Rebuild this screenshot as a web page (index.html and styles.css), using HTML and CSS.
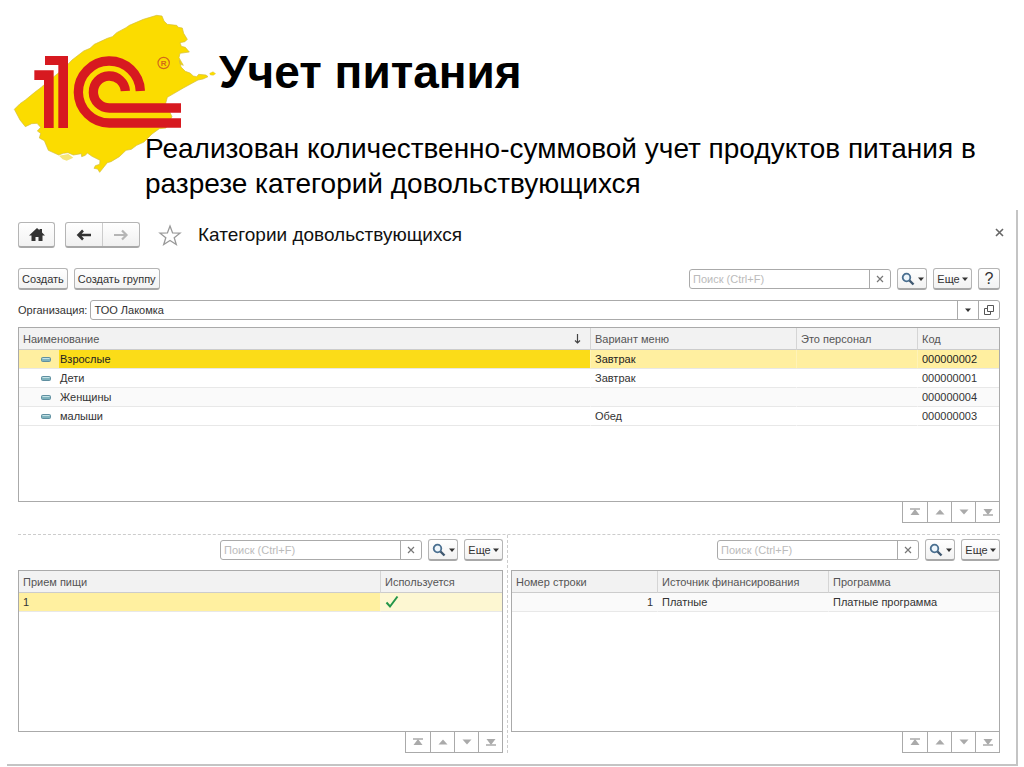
FILE: index.html
```html
<!DOCTYPE html>
<html lang="ru">
<head>
<meta charset="utf-8">
<title>Учет питания</title>
<link rel="stylesheet" href="styles.css">
</head>
<body>
<svg class="defs" aria-hidden="true">
  <symbol id="i-search" viewBox="0 0 14 14"><circle cx="5.500" cy="5.500" r="3.800" fill="#eef6fc" stroke="#4a6f90" stroke-width="1.800"/><path d="M8.500 8.500L12.500 12.500" stroke="#3f5870" stroke-width="2.400"/></symbol>
  <symbol id="i-caret" viewBox="0 0 6 4"><path d="M0 .5H6L3 4Z" fill="#333"/></symbol>
  <symbol id="i-x" viewBox="0 0 8 8"><path d="M1 1L7 7M7 1L1 7" stroke="#777" stroke-width="1.200"/></symbol>
  <symbol id="i-item" viewBox="0 0 10 5"><rect x=".5" y=".5" width="9" height="4" rx="1" fill="#7fb3bd" stroke="#5f8fa0"/><path d="M1.500 1.500H8.500" stroke="#c5e2e6"/></symbol>
  <symbol id="i-first" viewBox="0 0 10 8"><path d="M0 1H10" stroke="#aaa" stroke-width="1.500"/><path d="M5 1L9.500 7H.5Z" fill="#aaa"/></symbol>
  <symbol id="i-up" viewBox="0 0 10 8"><path d="M5 1.500L9.500 6.500H.5Z" fill="#aaa"/></symbol>
  <symbol id="i-down" viewBox="0 0 10 8"><path d="M5 6.500L9.500 1.500H.5Z" fill="#aaa"/></symbol>
  <symbol id="i-last" viewBox="0 0 10 8"><path d="M0 7H10" stroke="#aaa" stroke-width="1.500"/><path d="M5 7L9.500 1H.5Z" fill="#aaa"/></symbol>
</svg>

<header class="slide-head">
  <svg class="logo" viewBox="36 36 615 492" role="img" aria-label="1С">
    <path fill="#fbdc00" stroke="#d3bd3c" stroke-width="2" d="M43 328L60 311L76 300L104 277L124 262L132 254L190 207L216 180L251 153L270 145L283 133L322 115L337 110L350 98L378 83L388 76L430 58L470 46L486 48L492 63L502 73L530 76L535 82L547 84L551 100L562 118L555 125L540 128L544 139L556 142L568 156L540 160L537 173L550 196L541 193L538 181L543 201L556 214L570 219L580 228L590 230L596 223L618 225L624 230L609 237L594 240L550 264L502 292L497 310L516 350L498 384L478 386L456 402L432 426L410 436L394 448L378 451L358 470L333 485L322 488L299 517L293 507L282 505L286 497L299 493L300 481L276 469L262 459L256 466L245 470L244 461L220 465L204 458L190 460L176 465L145 451L133 422L118 414L122 400L112 393L122 382L111 370L95 371L76 380L60 360Z"/>
    <path fill="#f6e678" d="M177 467L205 462L220 473L200 482L188 478Z"/>
    <path fill="#fbdc00" stroke="#d3bd3c" stroke-width="1" d="M629 220L639 215L647 221L640 226L631 225Z"/>
    <path fill="#d71920" d="M135 168H204V384H175V195H135ZM103 211H161V384H132V240H103Z"/>
    <g fill="none" stroke="#d71920" stroke-width="28"><path d="M421 273A93 93 0 1 0 328 369H543"/><path d="M376 273A48 48 0 1 0 328 324H543"/></g>
    <circle cx="491" cy="189" r="17" fill="none" stroke="#d2691a" stroke-width="3.500"/>
    <text class="reg" x="491" y="198" text-anchor="middle">R</text>
  </svg>
  <h1>Учет питания</h1>
  <p>Реализован количественно-суммовой учет продуктов питания в разрезе категорий довольствующихся</p>
</header>

<main class="window">
  <div class="titlebar">
    <button class="btn nav-home" aria-label="Домой"><svg width="16" height="14" viewBox="0 0 16 14"><path fill="#333" d="M8 0L10.500 2.300V1H13V4.600L16 7.500H13.500V13H9.500V9H6.500V13H2.500V7.500H0Z"/></svg></button>
    <div class="nav-pair">
      <button aria-label="Назад"><svg width="16" height="12" viewBox="0 0 16 12"><path d="M15 6H3M7 1.500L2.500 6L7 10.500" fill="none" stroke="#333" stroke-width="2.600"/></svg></button>
      <button aria-label="Вперед"><svg width="16" height="12" viewBox="0 0 16 12"><path d="M1 6H13M9 1.500L13.500 6L9 10.500" fill="none" stroke="#b5b5b5" stroke-width="2.200"/></svg></button>
    </div>
    <button class="plain star" aria-label="В избранное"><svg width="24" height="22" viewBox="0 0 24 22"><path d="M12 2L14.600 8.900L22 9.200L16.200 13.700L18.300 20.500L12 16.500L5.700 20.500L7.800 13.700L2 9.200L9.400 8.900Z" fill="#fff" stroke="#999" stroke-width="1.300"/></svg></button>
    <h2>Категории довольствующихся</h2>
    <button class="plain close" aria-label="Закрыть"><svg width="9" height="9" viewBox="0 0 9 9"><path d="M1 1L8 8M8 1L1 8" stroke="#666" stroke-width="1.600"/></svg></button>
  </div>

  <div class="toolbar">
    <button class="btn">Создать</button>
    <button class="btn">Создать группу</button>
    <div class="search"><input type="text" placeholder="Поиск (Ctrl+F)" aria-label="Поиск категорий"><button aria-label="Очистить"><svg width="8" height="8"><use href="#i-x"/></svg></button></div>
    <button class="btn find" aria-label="Найти"><svg width="14" height="14"><use href="#i-search"/></svg><svg width="6" height="4"><use href="#i-caret"/></svg></button>
    <button class="btn more">Еще<svg width="6" height="4"><use href="#i-caret"/></svg></button>
    <button class="btn help">?</button>
  </div>

  <div class="org">
    <label for="org">Организация:</label>
    <div class="field"><input id="org" type="text" value="ТОО Лакомка"><button aria-label="Выбрать"><svg width="6" height="4"><use href="#i-caret"/></svg></button><button aria-label="Открыть"><svg width="10" height="10" viewBox="0 0 10 10"><path d="M3.500.5H9.500V6.500H3.500ZM3.500 3.500H.5V9.500H6.500V6.500" fill="none" stroke="#555"/></svg></button></div>
  </div>

  <div class="grid upper">
    <table>
      <colgroup><col><col class="c-menu"><col class="c-staff"><col class="c-code"></colgroup>
      <thead><tr><th class="sorted"><div>Наименование<svg width="7" height="10" viewBox="0 0 7 10"><path d="M3.500 0V9M1 6.500L3.500 9L6 6.500" fill="none" stroke="#444" stroke-width="1.200"/></svg></div></th><th>Вариант меню</th><th>Это персонал</th><th>Код</th></tr></thead>
      <tbody>
        <tr class="selected"><td class="name"><svg width="10" height="5"><use href="#i-item"/></svg><span>Взрослые</span></td><td>Завтрак</td><td></td><td>000000002</td></tr>
        <tr><td class="name"><svg width="10" height="5"><use href="#i-item"/></svg><span>Дети</span></td><td>Завтрак</td><td></td><td>000000001</td></tr>
        <tr class="alt"><td class="name"><svg width="10" height="5"><use href="#i-item"/></svg><span>Женщины</span></td><td></td><td></td><td>000000004</td></tr>
        <tr><td class="name"><svg width="10" height="5"><use href="#i-item"/></svg><span>малыши</span></td><td>Обед</td><td></td><td>000000003</td></tr>
      </tbody>
    </table>
  </div>
  <div class="pager">
    <button aria-label="В начало"><svg width="10" height="8"><use href="#i-first"/></svg></button><button aria-label="Вверх"><svg width="10" height="8"><use href="#i-up"/></svg></button><button aria-label="Вниз"><svg width="10" height="8"><use href="#i-down"/></svg></button><button aria-label="В конец"><svg width="10" height="8"><use href="#i-last"/></svg></button>
  </div>

  <div class="split">
    <section class="pane">
      <div class="toolbar">
        <div class="search"><input type="text" placeholder="Поиск (Ctrl+F)" aria-label="Поиск приема пищи"><button aria-label="Очистить"><svg width="8" height="8"><use href="#i-x"/></svg></button></div>
        <button class="btn find" aria-label="Найти"><svg width="14" height="14"><use href="#i-search"/></svg><svg width="6" height="4"><use href="#i-caret"/></svg></button>
        <button class="btn more">Еще<svg width="6" height="4"><use href="#i-caret"/></svg></button>
      </div>
      <div class="grid">
        <table>
          <colgroup><col><col class="c-used"></colgroup>
          <thead><tr><th>Прием пищи</th><th>Используется</th></tr></thead>
          <tbody><tr class="current"><td>1</td><td class="check"><svg width="14" height="14" viewBox="0 0 14 14" role="img" aria-label="Да"><path d="M1.500 7.500L5 11.500L12.500 1.500" fill="none" stroke="#23964a" stroke-width="2"/></svg></td></tr></tbody>
        </table>
      </div>
      <div class="pager">
        <button aria-label="В начало"><svg width="10" height="8"><use href="#i-first"/></svg></button><button aria-label="Вверх"><svg width="10" height="8"><use href="#i-up"/></svg></button><button aria-label="Вниз"><svg width="10" height="8"><use href="#i-down"/></svg></button><button aria-label="В конец"><svg width="10" height="8"><use href="#i-last"/></svg></button>
      </div>
    </section>
    <section class="pane">
      <div class="toolbar">
        <div class="search"><input type="text" placeholder="Поиск (Ctrl+F)" aria-label="Поиск источника"><button aria-label="Очистить"><svg width="8" height="8"><use href="#i-x"/></svg></button></div>
        <button class="btn find" aria-label="Найти"><svg width="14" height="14"><use href="#i-search"/></svg><svg width="6" height="4"><use href="#i-caret"/></svg></button>
        <button class="btn more">Еще<svg width="6" height="4"><use href="#i-caret"/></svg></button>
      </div>
      <div class="grid">
        <table>
          <colgroup><col class="c-line"><col class="c-source"><col></colgroup>
          <thead><tr><th>Номер строки</th><th>Источник финансирования</th><th>Программа</th></tr></thead>
          <tbody><tr class="alt"><td class="num">1</td><td>Платные</td><td>Платные программа</td></tr></tbody>
        </table>
      </div>
      <div class="pager">
        <button aria-label="В начало"><svg width="10" height="8"><use href="#i-first"/></svg></button><button aria-label="Вверх"><svg width="10" height="8"><use href="#i-up"/></svg></button><button aria-label="Вниз"><svg width="10" height="8"><use href="#i-down"/></svg></button><button aria-label="В конец"><svg width="10" height="8"><use href="#i-last"/></svg></button>
      </div>
    </section>
  </div>
</main>
</body>
</html>
```

FILE: styles.css
```css
* { box-sizing: border-box; }
body {
  margin: 0;
  min-height: 100vh;
  display: flex;
  flex-direction: column;
  background: #fff;
  color: #000;
  font-family: "Liberation Sans", Arial, sans-serif;
}
.defs { position: absolute; width: 0; height: 0; }
svg { display: block; flex: none; }
button, input { font: inherit; color: inherit; margin: 0; }
button { display: flex; align-items: center; justify-content: center; padding: 0; border: 0; background: none; }

.slide-head { position: relative; padding: 46px 24px 9px 145px; }
.logo { position: absolute; left: 12px; top: 12px; width: 205px; height: 164px; }
.reg { font-size: 24px; font-weight: bold; fill: #d2691a; }
.slide-head h1 { position: relative; margin: 0 0 33px 74px; font-size: 46px; line-height: 52px; }
.slide-head p { position: relative; margin: 0; font-size: 28px; line-height: 35px; }

.window {
  flex: 1;
  display: flex;
  flex-direction: column;
  margin: 0 6px 1px 7px;
  padding: 12px 16px 11px 11px;
  border-right: 2px solid #c4c4c4;
  border-bottom: 2px solid #c4c4c4;
  font-size: 11px;
  color: #333;
}
.btn {
  height: 22px;
  padding: 0 3px;
  border: 1px solid #b5b5b5;
  border-bottom: 2px solid #a8a8a8;
  border-radius: 3px;
  background: linear-gradient(#fff, #f2f2f2);
  white-space: nowrap;
}
.titlebar { display: flex; align-items: center; height: 26px; }
.nav-home { width: 37px; height: 26px; }
.nav-pair {
  display: flex;
  width: 75px;
  height: 26px;
  margin-left: 10px;
  border: 1px solid #b5b5b5;
  border-bottom: 2px solid #a8a8a8;
  border-radius: 3px;
  background: linear-gradient(#fff, #f0f0f0);
}
.nav-pair button { flex: 1; }
.nav-pair button + button { border-left: 1px solid #ccc; }
.star { margin-left: 18px; }
.titlebar h2 { margin: 0 0 0 16px; font-size: 19px; line-height: 24px; font-weight: normal; color: #111; }
.close { margin: 0 -4px 6px auto; }

.toolbar { display: flex; align-items: center; gap: 6px; margin-top: 20px; height: 22px; }
.search {
  display: flex;
  width: 202px;
  height: 20px;
  margin-left: auto;
  border: 1px solid #aaa;
  border-radius: 3px;
}
.search input, .field input { flex: 1; min-width: 0; padding: 0 3px; border: 0; background: none; outline: 0; }
.search input::placeholder { color: #bbb; opacity: 1; }
.search button { width: 21px; border-left: 1px solid #aaa; }
.find { width: 30px; gap: 3px; }
.more { width: 39px; gap: 2px; padding: 0; }
.help { width: 22px; padding: 0; font-size: 16px; }

.org { display: flex; align-items: center; gap: 3px; margin-top: 10px; }
.field { flex: 1; display: flex; height: 20px; border: 1px solid #aaa; border-radius: 3px; }
.field button { width: 21px; border-left: 1px solid #aaa; }

.grid { border: 1px solid #aaa; }
.upper { min-height: 175px; margin-top: 7px; }
table { width: 100%; border-collapse: separate; border-spacing: 0; table-layout: fixed; }
th { height: 22px; padding: 0 4px; background: #f2f2f2; border-bottom: 1px solid #ccc; font-weight: normal; text-align: left; color: #555; white-space: nowrap; }
th + th { border-left: 1px solid #d5d5d5; }
td { height: 19px; padding: 0 4px; border-bottom: 1px solid #e8e8e8; line-height: 16px; }
td + td { border-left: 1px solid transparent; }
.sorted div { display: flex; align-items: center; justify-content: space-between; padding-right: 5px; }
.name { padding: 0; }
.name svg { display: inline-block; vertical-align: middle; margin: 0 9px 0 22px; }
.name span { vertical-align: middle; }
.alt td { background: #fafafa; }
.selected td { background: #ffefa0; color: #222; }
.selected .name { background: linear-gradient(90deg, #ffefa0 40px, #fbdc18 40px); }
.selected td + td { border-left-color: #fff3b8; }
.current td { background: #fff0a0; }
.current .check { background: #fdf7d2; }
.num { text-align: right; }
.c-menu { width: 206px; }
.c-staff { width: 121px; }
.c-code { width: 82px; }
.c-used { width: 122px; }
.c-line { width: 145px; }
.c-source { width: 171px; }

.pager { display: flex; align-self: flex-end; height: 21px; border: 1px solid #aaa; border-top: 0; }
.pager button { width: 24px; }
.pager button + button { border-left: 1px solid #aaa; }

.split { flex: 1; display: grid; grid-template-columns: 490fr 492fr; margin-top: 11px; border-top: 1px dashed #ccc; }
.pane { display: flex; flex-direction: column; min-width: 0; }
.pane:first-child { padding-right: 4px; border-right: 1px dashed #ccc; }
.pane:last-child { padding-left: 3px; }
.pane .toolbar { margin-top: 4px; }
.pane .grid { flex: 1; margin-top: 9px; }
```
